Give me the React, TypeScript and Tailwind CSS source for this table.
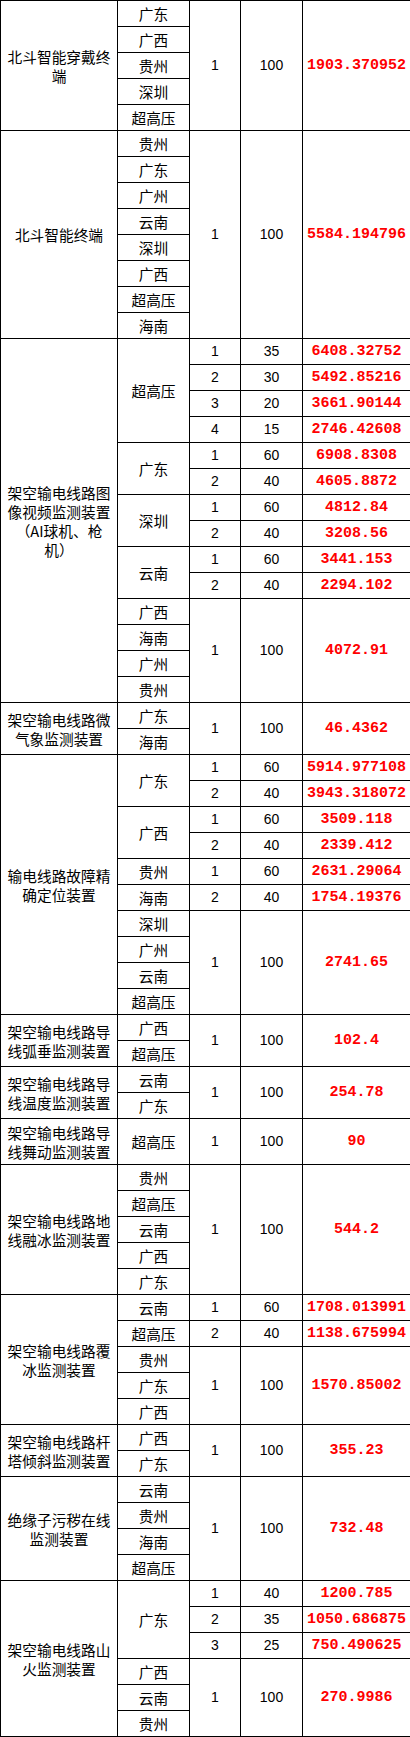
import type { ReactNode } from "react";

type Part = [string, string, string]; // 序号, 比例, 金额

// one region split into several parts, or several regions sharing one part
type Segment =
  | { region: string; parts: Part[] }
  | { regions: string[]; part: Part };

interface Group {
  name: string;
  segments: Segment[];
  tall?: boolean;
}

const groups: Group[] = [
  {
    name: "北斗智能穿戴终端",
    segments: [{ regions: ["广东", "广西", "贵州", "深圳", "超高压"], part: ["1", "100", "1903.370952"] }],
  },
  {
    name: "北斗智能终端",
    segments: [
      {
        regions: ["贵州", "广东", "广州", "云南", "深圳", "广西", "超高压", "海南"],
        part: ["1", "100", "5584.194796"],
      },
    ],
  },
  {
    // the source sheet breaks before the last character here
    name: "架空输电线路图像视频监测装置（AI球机、枪\n机）",
    segments: [
      {
        region: "超高压",
        parts: [
          ["1", "35", "6408.32752"],
          ["2", "30", "5492.85216"],
          ["3", "20", "3661.90144"],
          ["4", "15", "2746.42608"],
        ],
      },
      { region: "广东", parts: [["1", "60", "6908.8308"], ["2", "40", "4605.8872"]] },
      { region: "深圳", parts: [["1", "60", "4812.84"], ["2", "40", "3208.56"]] },
      { region: "云南", parts: [["1", "60", "3441.153"], ["2", "40", "2294.102"]] },
      { regions: ["广西", "海南", "广州", "贵州"], part: ["1", "100", "4072.91"] },
    ],
  },
  {
    name: "架空输电线路微气象监测装置",
    segments: [{ regions: ["广东", "海南"], part: ["1", "100", "46.4362"] }],
  },
  {
    name: "输电线路故障精确定位装置",
    segments: [
      { region: "广东", parts: [["1", "60", "5914.977108"], ["2", "40", "3943.318072"]] },
      { region: "广西", parts: [["1", "60", "3509.118"], ["2", "40", "2339.412"]] },
      { region: "贵州", parts: [["1", "60", "2631.29064"]] },
      { region: "海南", parts: [["2", "40", "1754.19376"]] },
      { regions: ["深圳", "广州", "云南", "超高压"], part: ["1", "100", "2741.65"] },
    ],
  },
  {
    name: "架空输电线路导线弧垂监测装置",
    segments: [{ regions: ["广西", "超高压"], part: ["1", "100", "102.4"] }],
  },
  {
    name: "架空输电线路导线温度监测装置",
    segments: [{ regions: ["云南", "广东"], part: ["1", "100", "254.78"] }],
  },
  {
    name: "架空输电线路导线舞动监测装置",
    tall: true,
    segments: [{ regions: ["超高压"], part: ["1", "100", "90"] }],
  },
  {
    name: "架空输电线路地线融冰监测装置",
    segments: [{ regions: ["贵州", "超高压", "云南", "广西", "广东"], part: ["1", "100", "544.2"] }],
  },
  {
    name: "架空输电线路覆冰监测装置",
    segments: [
      { region: "云南", parts: [["1", "60", "1708.013991"]] },
      { region: "超高压", parts: [["2", "40", "1138.675994"]] },
      { regions: ["贵州", "广东", "广西"], part: ["1", "100", "1570.85002"] },
    ],
  },
  {
    name: "架空输电线路杆塔倾斜监测装置",
    segments: [{ regions: ["广西", "广东"], part: ["1", "100", "355.23"] }],
  },
  {
    name: "绝缘子污秽在线监测装置",
    segments: [{ regions: ["云南", "贵州", "海南", "超高压"], part: ["1", "100", "732.48"] }],
  },
  {
    name: "架空输电线路山火监测装置",
    segments: [
      {
        region: "广东",
        parts: [
          ["1", "40", "1200.785"],
          ["2", "35", "1050.686875"],
          ["3", "25", "750.490625"],
        ],
      },
      { regions: ["广西", "云南", "贵州"], part: ["1", "100", "270.9986"] },
    ],
  },
];

const segRows = (s: Segment) => ("region" in s ? s.parts.length : s.regions.length);

const Cell = ({ children, rowSpan, className = "" }: { children: ReactNode; rowSpan?: number; className?: string }) => (
  <td rowSpan={rowSpan} className={`border border-black p-0 text-center align-middle ${className}`}>
    {children}
  </td>
);

const partCells = (p: Part, rowSpan?: number) => [
  <Cell key="n" rowSpan={rowSpan} className="font-['Liberation_Sans',sans-serif] text-[14px]">
    {p[0]}
  </Cell>,
  <Cell key="r" rowSpan={rowSpan} className="font-['Liberation_Sans',sans-serif] text-[14px]">
    {p[1]}
  </Cell>,
  <Cell key="a" rowSpan={rowSpan} className="font-['Liberation_Mono',monospace] text-[15px] font-bold text-[#ff0000]">
    {p[2]}
  </Cell>,
];

function GroupRows({ group }: { group: Group }) {
  const total = group.segments.reduce((n, s) => n + segRows(s), 0);
  const rows: ReactNode[] = [];

  group.segments.forEach((seg, si) => {
    for (let i = 0; i < segRows(seg); i++) {
      const first = si === 0 && i === 0;
      const cells: ReactNode[] = [];
      if (first) {
        cells.push(
          <Cell key="name" rowSpan={total} className="whitespace-pre-line">
            {group.name}
          </Cell>
        );
      }
      if ("region" in seg) {
        if (i === 0) cells.push(<Cell key="reg" rowSpan={seg.parts.length}>{seg.region}</Cell>);
        cells.push(...partCells(seg.parts[i]));
      } else {
        cells.push(<Cell key="reg">{seg.regions[i]}</Cell>);
        if (i === 0) cells.push(...partCells(seg.part, seg.regions.length));
      }
      rows.push(
        <tr key={`${si}-${i}`} className={group.tall ? "h-[46px]" : "h-[26px]"}>
          {cells}
        </tr>
      );
    }
  });

  return <>{rows}</>;
}

export default function App() {
  return (
    <div className="w-[410px] bg-white">
      <table className="w-[410px] table-fixed border-collapse font-['Noto_Sans_CJK_SC',sans-serif] text-[14.7px] leading-[19px] text-black">
        <colgroup>
          <col className="w-[117px]" />
          <col className="w-[72px]" />
          <col className="w-[51px]" />
          <col className="w-[62px]" />
          <col className="w-[108px]" />
        </colgroup>
        <tbody>
          {groups.map((g) => (
            <GroupRows key={g.name} group={g} />
          ))}
        </tbody>
      </table>
    </div>
  );
}
